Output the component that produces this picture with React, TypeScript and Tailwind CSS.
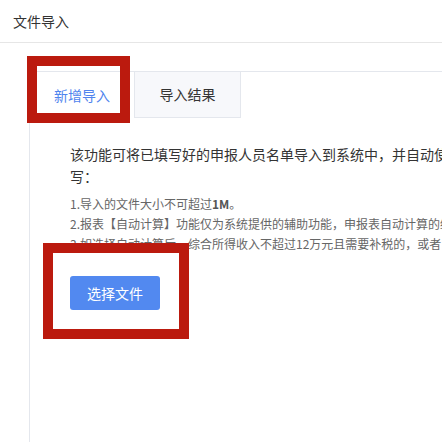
import React from "react";

export default function App() {
  return (
    <div
      className="relative w-[442px] h-[442px] overflow-hidden bg-white text-[#333]"
      style={{ fontFamily: '"Microsoft YaHei", "Noto Sans CJK SC", "Liberation Sans", sans-serif' }}
    >
      <div className="h-[43px] border-b border-[#e6e6e6] flex items-center pl-[13px] text-[14px] leading-[20px] text-[#333]">
        文件导入
      </div>
      <div className="ml-[29px] mt-[28px] w-[800px] h-[400px] border-l border-t border-[#e4e7ed]">
        <div className="flex h-[46px]">
          <div className="w-[104px] flex items-center justify-center text-[14px] text-[#4f84ee] bg-white">
            新增导入
          </div>
          <div className="w-[107px] flex items-center justify-center text-[14px] text-[#333] bg-[#f7f8fb] border-l border-r border-b border-[#e4e7ed]">
            导入结果
          </div>
        </div>
        <div className="pl-[40px] pt-[25px]">
          <div className="w-[372px] text-[14px] leading-[22px] text-[#333]">
            <div className="whitespace-nowrap">该功能可将已填写好的申报人员名单导入到系统中，并自动使用</div>
            <div>写：</div>
          </div>
          <div className="mt-[7px] text-[12px] leading-[20px] text-[#666] whitespace-nowrap">
            <div>
              1.导入的文件大小不可超过<span className="font-bold text-[#555]">1M</span>。
            </div>
            <div>2.报表【自动计算】功能仅为系统提供的辅助功能，申报表自动计算的结果仅供参考</div>
            <div>3.如选择自动计算后，综合所得收入不超过12万元且需要补税的，或者</div>
          </div>
          <button className="mt-[22px] w-[90px] h-[34px] rounded-[3px] bg-[#5289f0] text-white text-[14px] flex items-center justify-center">
            选择文件
          </button>
        </div>
      </div>

      <div className="absolute left-[27px] top-[56px] w-[103px] h-[67px] border-[10px] border-[#bb1a0e]" />
      <div className="absolute left-[43px] top-[243px] w-[146px] h-[96px] border-[10px] border-[#bb1a0e]" />
    </div>
  );
}
